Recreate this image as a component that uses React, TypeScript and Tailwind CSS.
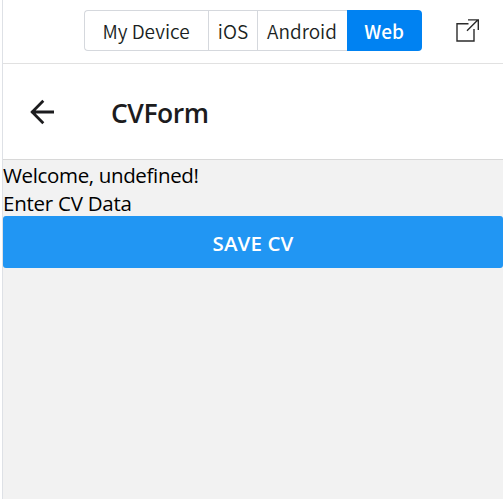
import React from "react";

const segment = "flex h-full items-center justify-center whitespace-nowrap";

function DeviceTabs() {
  return (
    <div className="flex h-[41px] w-[338px] font-['Noto_Sans_CJK_JP',sans-serif] text-[19px] leading-none font-[350] text-[#1b1f23]">
      <div className={`${segment} w-[124px] rounded-l-[4px] border border-r-0 border-[#d5d8dd] pr-px`}>My Device</div>
      <div className={`${segment} w-[49px] border border-r-0 border-[#d5d8dd]`}>iOS</div>
      <div className={`${segment} w-[90px] border border-r-0 border-[#d5d8dd] pr-px`}>Android</div>
      <div className={`${segment} w-[75px] rounded-r-[4px] bg-[#0082f2] pr-px font-medium text-white`}>Web</div>
    </div>
  );
}

export default function App() {
  return (
    <div className="flex h-[499px] w-[503px] overflow-hidden bg-white">
      <div className="w-[3px] shrink-0 border-r border-[#dee1e6]" />
      <div className="flex min-w-0 flex-1 flex-col">
        <header className="flex h-16 shrink-0 items-start border-b border-[#e1e1e1] pt-[10px] pl-[81px]">
          <DeviceTabs />
          <svg className="mt-[8px] ml-[33px]" width="26" height="26" viewBox="0 0 26 26" fill="none" stroke="#2b2b2b" strokeWidth="1.4">
            <path d="M13.5 5.8H2V23H19V11" />
            <path d="M12 12.7L23 1.8M13 1.9H23.3V12" />
          </svg>
        </header>
        <div className="flex h-24 shrink-0 items-center border-b border-[#d8d8d8] pl-[26px]">
          <svg width="26" height="26" viewBox="0 0 26 26" fill="none" stroke="#1c1c1e" strokeWidth="2.8">
            <path d="M14.3 1.8L3.2 13L14.3 24.2M2.3 13H25" />
          </svg>
          <h1 className="mt-[2px] ml-[56px] font-['Open_Sans',sans-serif] text-[26.5px] leading-9 font-[550] tracking-[-0.45px] whitespace-nowrap text-[#1c1c1e]">CVForm</h1>
        </div>
        <main className="flex-1 bg-[#f2f2f2] pt-[2px] font-['Open_Sans',sans-serif] text-[20.5px] text-black">
          <p className="h-[27px] leading-[27px] tracking-[-0.35px] whitespace-nowrap">Welcome, undefined!</p>
          <p className="h-[27px] leading-[29px] tracking-[-0.25px] whitespace-nowrap">Enter CV Data</p>
          <button className="flex h-[52px] w-full items-center justify-center rounded-[3px] bg-[#2196f3] pt-[2px] text-[20.5px] font-semibold tracking-[0.1px] text-white">SAVE CV</button>
        </main>
      </div>
    </div>
  );
}
